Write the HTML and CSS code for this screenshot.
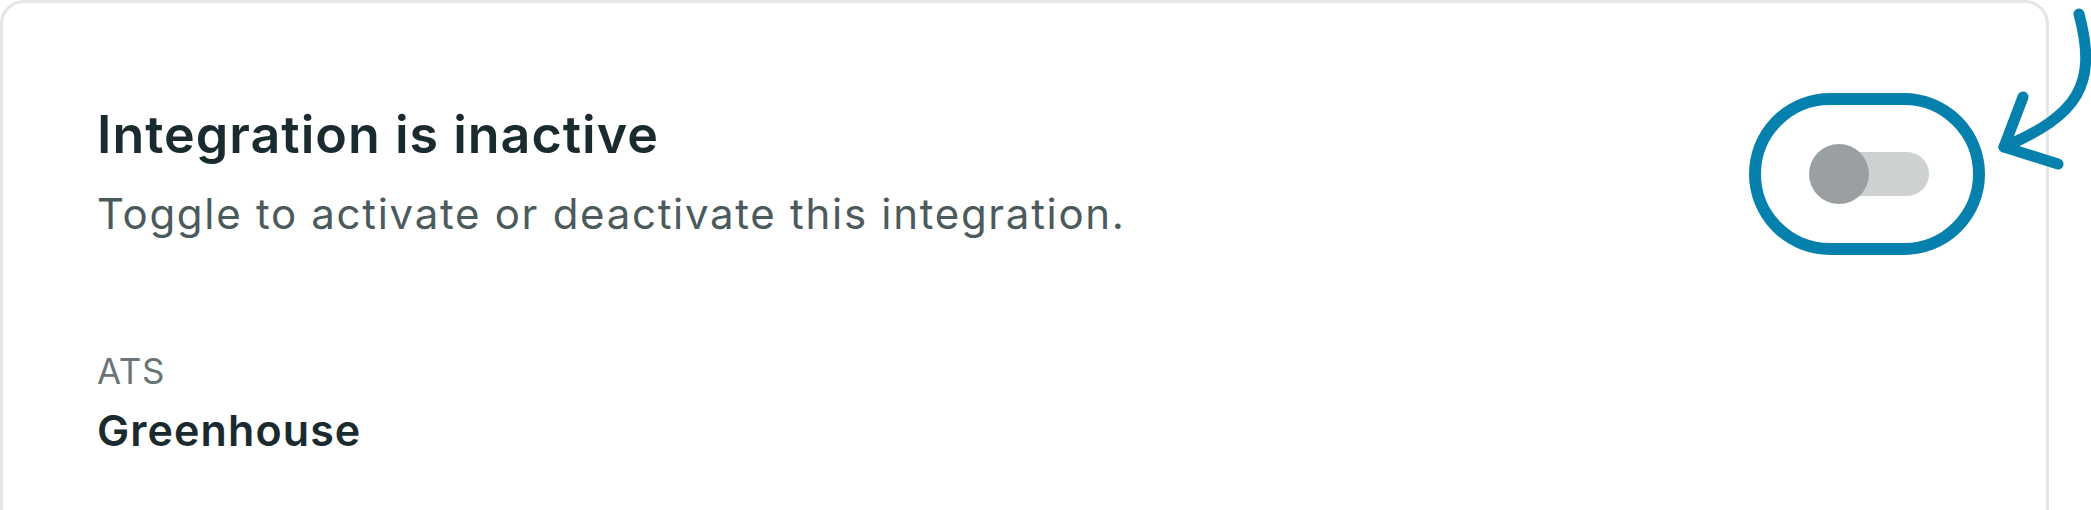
FILE: index.html
```html
<!DOCTYPE html>
<html lang="en">
<head>
<meta charset="utf-8">
<title>Integration</title>
<link rel="stylesheet" href="styles.css">
</head>
<body>
<div class="page">
  <section class="card">
    <div class="header">
      <div class="header-text">
        <h1 class="title">Integration is inactive</h1>
        <p class="subtitle">Toggle to activate or deactivate this integration.</p>
      </div>
      <div class="switch" role="switch" aria-checked="false">
        <span class="track"></span>
        <span class="knob"></span>
      </div>
    </div>
    <div class="field">
      <div class="field-label">ATS</div>
      <div class="field-value">Greenhouse</div>
    </div>
  </section>
  <svg class="annotation" width="2091" height="510" viewBox="0 0 2091 510" aria-hidden="true">
    <rect x="1755" y="99" width="224" height="150" rx="75" ry="75" fill="none" stroke="#0680ad" stroke-width="12"/>
    <path d="M2079 14 C2098 85 2078 115 2004 147" fill="none" stroke="#0680ad" stroke-width="11" stroke-linecap="round"/>
    <path d="M2023 97 L2004 147 L2058 164" fill="none" stroke="#0680ad" stroke-width="11" stroke-linecap="round" stroke-linejoin="round"/>
  </svg>
</div>
</body>
</html>
```

FILE: styles.css
```css
html, body {
  margin: 0;
  padding: 0;
  background: #ffffff;
}

body {
  font-family: Inter, "Noto Sans", "Liberation Sans", sans-serif;
  color: #1a2b2f;
}

.page {
  position: relative;
  width: 2091px;
  height: 510px;
  overflow: hidden;
}

.card {
  box-sizing: border-box;
  width: 2049px;
  min-height: 640px;
  border: 3px solid #e4e6e6;
  border-radius: 24px;
  padding: 101px 96px 0 94px;
  background: #ffffff;
}

.header {
  display: flex;
  justify-content: space-between;
  align-items: center;
}

.title {
  margin: 0;
  font-size: 52px;
  line-height: 62px;
  font-weight: 600;
  color: #1a2b2f;
  letter-spacing: 1px;
}

.subtitle {
  margin: 23px 0 0 0;
  font-size: 42px;
  line-height: 50px;
  font-weight: 400;
  color: #4b5a5c;
  letter-spacing: 1.7px;
}

.switch {
  position: relative;
  display: flex;
  align-items: center;
  width: 120px;
  height: 60px;
  margin: 5px 21px 0 0;
}

.track {
  display: block;
  margin-left: 6px;
  width: 114px;
  height: 44px;
  border-radius: 22px;
  background: #cdd1d1;
}

.knob {
  position: absolute;
  left: 0;
  top: 0;
  width: 60px;
  height: 60px;
  border-radius: 50%;
  background: #9aa0a1;
}

.field {
  margin-top: 111px;
}

.field-label {
  font-size: 35px;
  line-height: 42px;
  font-weight: 400;
  color: #6a7576;
  letter-spacing: 0.6px;
}

.field-value {
  margin-top: 12px;
  font-size: 43px;
  line-height: 52px;
  font-weight: 600;
  color: #1a2b2f;
  letter-spacing: 1.1px;
}

.annotation {
  position: absolute;
  left: 0;
  top: 0;
  pointer-events: none;
  overflow: visible;
}
```
